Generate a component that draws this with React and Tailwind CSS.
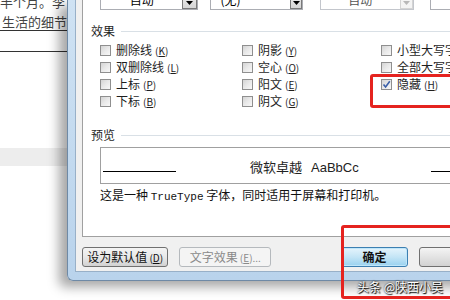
const CJK = "font-['Noto_Sans_CJK_SC','Noto_Sans',sans-serif]";

function Arrow({ disabled }) {
  return (
    <svg width="7" height="4" viewBox="0 0 7 4">
      <path d="M0 0 L7 0 L3.5 4 Z" fill={disabled ? "#b8b8b8" : "#000"} />
    </svg>
  );
}

function Check({ checked }) {
  return (
    <span className="w-[11px] h-[11px] shrink-0 border border-[#8f8f8f] bg-linear-to-br from-[#d4d4d4] via-[#e9e9e9] to-[#f8f8f8] flex items-center justify-center">
      {checked && (
        <svg width="9" height="9" viewBox="0 0 9 9">
          <path d="M1.5 4.5 L3.6 7 L7.8 1.2" fill="none" stroke="#3a5fa8" strokeWidth="1.6" />
        </svg>
      )}
    </span>
  );
}

function Item({ label, k, checked }) {
  return (
    <div className="flex items-center h-[17px]">
      <Check checked={checked} />
      <span className="ml-[5px] text-[12px] leading-[14px] text-[#1e1e1e] whitespace-nowrap">
        {label}
        <span className="ml-[3px] text-[10px]">
          (<span className="underline">{k}</span>)
        </span>
      </span>
    </div>
  );
}

function GroupHead({ label }) {
  return (
    <div className="flex items-center h-[14px] ml-[8px]">
      <span className="text-[12px] leading-[14px] text-[#1e1e1e]">{label}</span>
      <div className="flex-1 h-px bg-[#d9e0e6] ml-[6px]"></div>
    </div>
  );
}

export default function App() {
  return (
    <div className={`relative w-[450px] h-[300px] overflow-hidden bg-white flex ${CJK}`}>
      {/* background document */}
      <div className="w-[67px] shrink-0 flex flex-col">
        <div className="mt-[-8px] text-[13px] leading-[20px] text-[#444] whitespace-nowrap">半个月。李</div>
        <div className="mt-[2px] text-[13px] leading-[16px] text-[#444] ml-[2px] whitespace-nowrap">生活的细节</div>
        <div className="mt-[0px] h-px bg-[#333]"></div>
        <div className="mt-[20px] h-px bg-[#333]"></div>
        <div className="mt-[96px] h-[18px] bg-[#ededed]"></div>
      </div>

      {/* dialog frame */}
      <div className="w-[420px] shrink-0 h-[281px] border-l border-b border-[#6f8aa6] rounded-bl-[6px] bg-linear-to-b from-[#cfe2f3] to-[#b9d3ec] pl-[7px] pb-[8px] shadow-[-8px_6px_12px_rgba(0,0,0,0.35)]">
        <div className="h-full border-l border-b border-[#98b0c8] bg-[#f0f0f0] flex flex-col">
          {/* tab page */}
          <div className="ml-[6px] h-[237px] border-l border-b border-[#a0a0a0] bg-white flex flex-col">
            {/* dropdown row */}
            <div className="flex mt-[-11px] ml-[17px] h-[21px] text-[12px]">
              <div className="w-[103px] border border-[#abadb3] bg-white flex">
                <div className="flex-1 text-center leading-[19px]">自动</div>
                <div className="w-[15px] border border-[#7a7a7a] bg-linear-to-b from-[#f4f4f4] to-[#d6d6d6] flex items-end justify-center pb-[3px]">
                  <Arrow />
                </div>
              </div>
              <div className="ml-[12px] w-[97px] border border-[#abadb3] bg-white flex">
                <div className="flex-1 pl-[9px] leading-[19px]">(无)</div>
                <div className="w-[12px] border border-[#7a7a7a] bg-linear-to-b from-[#f4f4f4] to-[#d6d6d6] flex items-end justify-center pb-[3px]">
                  <Arrow />
                </div>
              </div>
              <div className="ml-[17px] w-[98px] border border-[#c3c6cc] bg-white flex">
                <div className="flex-1 text-center leading-[19px] text-[#555]">自动</div>
                <div className="w-[13px] border border-[#d4d4d4] bg-[#f4f4f4] flex items-end justify-center pb-[3px]">
                  <Arrow disabled />
                </div>
              </div>
              <div className="ml-[16px] w-[60px] border border-[#abadb3] bg-white"></div>
            </div>

            {/* effects */}
            <div className="mt-[14px]">
              <GroupHead label="效果" />
            </div>
            <div className="mt-[4px] ml-[17px] grid grid-cols-[142px_139px_1fr]">
              <Item label="删除线" k="K" />
              <Item label="阴影" k="Y" />
              <Item label="小型大写字母" k="M" />
              <Item label="双删除线" k="L" />
              <Item label="空心" k="O" />
              <Item label="全部大写字母" k="A" />
              <Item label="上标" k="P" />
              <Item label="阳文" k="E" />
              <Item label="隐藏" k="H" checked />
              <Item label="下标" k="B" />
              <Item label="阴文" k="G" />
              <div></div>
            </div>

            {/* preview */}
            <div className="mt-[18px]">
              <GroupHead label="预览" />
            </div>
            <div className="mt-[5px] ml-[17px] h-[37px] border border-[#a0a0a0] flex items-start">
              <div className="mt-[23px] ml-[2px] w-[73px] h-px bg-black"></div>
              <div className="ml-[74px] mt-[11px] leading-[16px] text-[13px] text-[#222] whitespace-nowrap">
                微软卓越<span className="ml-[9px] font-['Liberation_Sans',sans-serif]">AaBbCc</span>
              </div>
              <div className="ml-[72px] mt-[23px] w-[40px] h-px bg-black"></div>
            </div>
            <div className="mt-[5px] ml-[17px] text-[12px] leading-[12px] text-[#111] whitespace-nowrap">
              这是一种 <span className="font-['Liberation_Mono',monospace] text-[11px]">TrueType</span> 字体，同时适用于屏幕和打印机。
            </div>
          </div>

          {/* buttons */}
          <div className="flex mt-[10px] ml-[6px] text-[12px]">
            <div className="w-[95px] h-[20px] border border-[#707070] rounded-[3px] bg-linear-to-b from-[#f4f4f4] via-[#e8e8e8] to-[#d2d2d2] flex items-center justify-center text-[#111]">
              设为默认值<span className="ml-[2px] text-[10px]">(<span className="underline">D</span>)</span>
            </div>
            <div className="ml-[11px] w-[101px] h-[20px] border border-[#b5b9bd] rounded-[3px] bg-[#f4f4f4] flex items-center justify-center text-[#8a8a8a]">
              文字效果<span className="ml-[2px] text-[10px]">(<span className="underline">E</span>)...</span>
            </div>
            <div className="ml-[70px] w-[73px] h-[20px] border border-[#3c7fb1] rounded-[3px] bg-linear-to-b from-[#e5f4fc] via-[#c4e5f6] to-[#98d1ef] shadow-[inset_0_0_0_1px_#bfe6fa] flex items-center justify-center text-[#111] font-bold">
              确定
            </div>
            <div className="ml-[11px] w-[75px] h-[20px] border border-[#707070] rounded-[3px] bg-linear-to-b from-[#f4f4f4] to-[#d2d2d2]"></div>
          </div>
        </div>
      </div>

      {/* annotations */}
      <div className="absolute left-[370px] top-[74px] w-[90px] h-[34px] border-[3px] border-[#e5231f] rounded-[3px]"></div>
      <div className="absolute left-[341px] top-[225px] w-[120px] h-[74px] border-[3px] border-[#e5231f] rounded-[3px]"></div>
      <div className="absolute left-[357px] top-[280px] text-[12px] leading-[14px] text-white whitespace-nowrap [text-shadow:0_0_2px_#000,1px_1px_1px_#000]">
        头条 @陕西小吴
      </div>
    </div>
  );
}
